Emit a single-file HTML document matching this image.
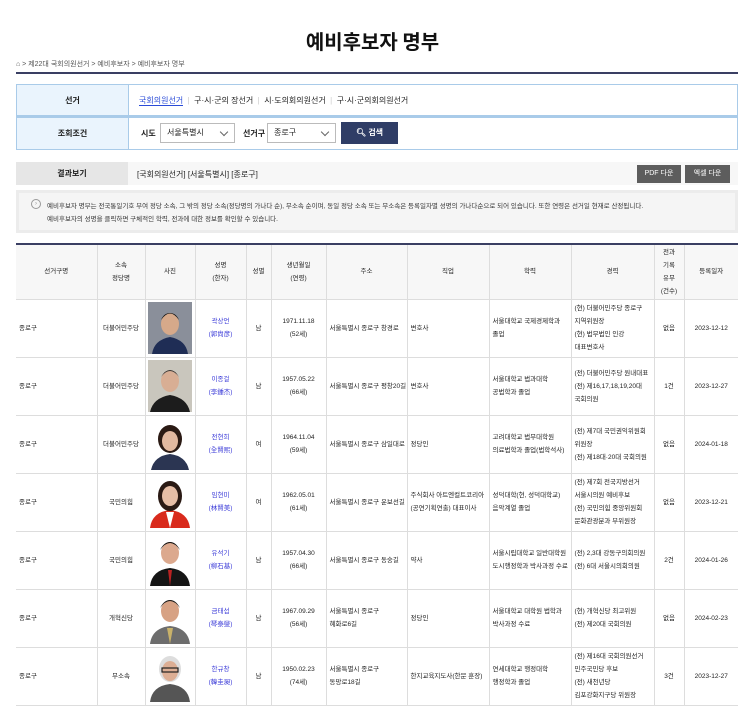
<!DOCTYPE html>
<html><head><meta charset="utf-8">
<style>
*{margin:0;padding:0;box-sizing:border-box}
body{width:745px;height:712px;background:#fff;font-family:"Liberation Sans","Noto Sans CJK KR",sans-serif;color:#222;position:relative;overflow:hidden;font-size:8px}
.a{position:absolute}
h1{position:absolute;left:0;width:745px;top:26px;text-align:center;font-size:20px;font-weight:bold;font-family:"Noto Sans CJK KR",sans-serif;color:#111}
.bc{left:16px;top:59px;font-size:7px;color:#555}
.line{left:16px;top:72px;width:722px;height:2px;background:#3a3f63}
.box{left:16px;width:722px;border:1px solid #a9cbe9;background:#fff}
.lab{position:absolute;left:0;top:0;bottom:0;width:112px;background:#eaf4fd;border-right:1px solid #a9cbe9;display:flex;align-items:center;justify-content:center;font-size:8px;font-weight:bold}
.sel{position:absolute;height:20px;border:1px solid #bbb;background:#fff;font-size:8px;padding:0 6px;line-height:18px}
.sel:after{content:"";position:absolute;right:7px;top:5px;width:5px;height:5px;border-right:1px solid #666;border-bottom:1px solid #666;transform:rotate(45deg)}
.btn{position:absolute;top:165px;height:18px;background:#5d5d5d;color:#fff;font-size:7px;line-height:18px;text-align:center}
table{position:absolute;left:16px;top:243px;width:722px;border-collapse:collapse;table-layout:fixed;border-top:2px solid #3a3f63}
td,th{border:1px solid #ddd;font-size:6.5px;text-align:center;vertical-align:middle;line-height:13px;font-weight:normal;color:#222;white-space:nowrap;overflow:hidden}
th{background:#f7f7f7;height:55px}
td{height:58px}
td:first-child,th:first-child{border-left:none}
td:last-child,th:last-child{border-right:none}
td.l{text-align:left;padding-left:3px}
.nm{color:#3b3bd8}
.ph{width:44px;height:52px;margin:0 auto;display:block}
</style></head><body>
<h1>예비후보자 명부</h1>
<div class="a bc">⌂ &gt; 제22대 국회의원선거 &gt; 예비후보자 &gt; 예비후보자 명부</div>
<div class="a line"></div>
<div class="a box" style="top:84px;height:32px"><div class="lab">선거</div>
<div class="a" style="left:122px;top:10px;font-size:8px;white-space:nowrap"><span style="color:#2a4bd8;border-bottom:1px solid #2a4bd8">국회의원선거</span><span style="color:#ccc"> &nbsp;|&nbsp; </span>구·시·군의 장선거<span style="color:#ccc"> &nbsp;|&nbsp; </span>시·도의회의원선거<span style="color:#ccc"> &nbsp;|&nbsp; </span>구·시·군의회의원선거</div></div>
<div class="a box" style="top:116px;height:34px;border-top:2px solid #a9cbe9"><div class="lab">조회조건</div>
<div class="a" style="left:124px;top:10px;font-weight:bold">시도</div>
<div class="sel" style="left:143px;top:5px;width:75px">서울특별시</div>
<div class="a" style="left:226px;top:10px;font-weight:bold">선거구</div>
<div class="sel" style="left:250px;top:5px;width:69px">종로구</div>
<div class="a" style="left:324px;top:4px;width:57px;height:22px;background:#2f3d66;color:#fff;font-size:8px;line-height:22px;text-align:center;font-weight:bold">🔍︎ 검색</div></div>
<div class="a" style="left:16px;top:162px;width:722px;height:23px;background:#f7f7f7"></div>
<div class="a" style="left:16px;top:162px;width:112px;height:23px;background:#e6e6e6;text-align:center;line-height:23px;font-weight:bold">결과보기</div>
<div class="a" style="left:137px;top:169px">[국회의원선거] [서울특별시] [종로구]</div>
<div class="btn" style="left:637px;width:44px">PDF 다운</div>
<div class="btn" style="left:685px;width:45px">엑셀 다운</div>
<div class="a" style="left:16px;top:190px;width:722px;height:43px;background:#ececec"></div>
<div class="a" style="left:19px;top:193px;width:716px;height:37px;background:#f5f5f5"></div>
<div class="a" style="left:31px;top:199px;width:10px;height:10px;border:1px solid #999;border-radius:50%;font-size:6px;line-height:8px;text-align:center;color:#999">›</div>
<div class="a" style="left:47px;top:200px;font-size:6.5px;line-height:13px;color:#333;white-space:nowrap">예비후보자 명부는 전국통일기호 부여 정당 소속, 그 밖의 정당 소속(정당명의 가나다 순), 무소속 순이며, 동일 정당 소속 또는 무소속은 등록일자별 성명의 가나다순으로 되어 있습니다. 또한 연령은 선거일 현재로 산정됩니다.<br>예비후보자의 성명을 클릭하면 구체적인 학력, 전과에 대한 정보를 확인할 수 있습니다.</div>
<table>
<colgroup><col style="width:81px"><col style="width:48px"><col style="width:50px"><col style="width:51px"><col style="width:25px"><col style="width:55px"><col style="width:81px"><col style="width:82px"><col style="width:82px"><col style="width:83px"><col style="width:30px"><col style="width:54px"></colgroup>
<tr><th>선거구명</th><th>소속<br>정당명</th><th>사진</th><th>성명<br>(한자)</th><th>성별</th><th>생년월일<br>(연령)</th><th>주소</th><th>직업</th><th>학력</th><th>경력</th><th>전과<br>기록<br>유무<br>(건수)</th><th>등록일자</th></tr>
<tr><td class="l">종로구</td><td>더불어민주당</td><td><svg class="ph" viewBox="0 0 44 52"><rect width="44" height="52" fill="#8a8f9a"/><path d="M4 52 Q6 38 22 35 Q38 38 40 52Z" fill="#1f2d55"/><ellipse cx="22" cy="22" rx="9" ry="11" fill="#d6a98a"/><path d="M13 18 Q22 5 31 18 Q28 11 22 11 Q16 11 13 18Z" fill="#111"/></svg></td><td><span class="nm">곽상언<br>(郭尙彦)</span></td><td>남</td><td>1971.11.18<br>(52세)</td><td class="l">서울특별시 종로구 창경로</td><td class="l">변호사</td><td class="l">서울대학교 국제경제학과<br>졸업</td><td class="l">(현) 더불어민주당 종로구<br>지역위원장<br>(현) 법무법인 인강<br>대표변호사</td><td>없음</td><td>2023-12-12</td></tr>
<tr><td class="l">종로구</td><td>더불어민주당</td><td><svg class="ph" viewBox="0 0 44 52"><rect width="44" height="52" fill="#c9c6bd"/><path d="M2 52 Q5 38 22 35 Q39 38 42 52Z" fill="#1c1c1c"/><ellipse cx="22" cy="21" rx="9" ry="11" fill="#d8ae94"/><path d="M13 17 Q22 5 31 17 Q27 10 22 10 Q17 10 13 17Z" fill="#333"/></svg></td><td><span class="nm">이종걸<br>(李鍾杰)</span></td><td>남</td><td>1957.05.22<br>(66세)</td><td class="l">서울특별시 종로구 평창20길</td><td class="l">변호사</td><td class="l">서울대학교 법과대학<br>공법학과 졸업</td><td class="l">(전) 더불어민주당 원내대표<br>(전) 제16,17,18,19,20대<br>국회의원</td><td>1건</td><td>2023-12-27</td></tr>
<tr><td class="l">종로구</td><td>더불어민주당</td><td><svg class="ph" viewBox="0 0 44 52"><rect width="44" height="52" fill="#fff"/><path d="M3 52 Q6 38 22 36 Q38 38 41 52Z" fill="#2b3552"/><ellipse cx="22" cy="21" rx="12" ry="14" fill="#2a1a14"/><ellipse cx="22" cy="23" rx="8" ry="10" fill="#e2b9a0"/></svg></td><td><span class="nm">전현희<br>(全賢熙)</span></td><td>여</td><td>1964.11.04<br>(59세)</td><td class="l">서울특별시 종로구 삼일대로</td><td class="l">정당인</td><td class="l">고려대학교 법무대학원<br>의료법학과 졸업(법학석사)</td><td class="l">(전) 제7대 국민권익위원회<br>위원장<br>(전) 제18대·20대 국회의원</td><td>없음</td><td>2024-01-18</td></tr>
<tr><td class="l">종로구</td><td>국민의힘</td><td><svg class="ph" viewBox="0 0 44 52"><rect width="44" height="52" fill="#fff"/><path d="M2 52 Q4 36 22 34 Q40 36 42 52Z" fill="#d92a1c"/><path d="M18 36 L22 52 L26 36Z" fill="#fff"/><ellipse cx="22" cy="20" rx="12" ry="15" fill="#2a1a14"/><ellipse cx="22" cy="20" rx="8" ry="10" fill="#e6bea6"/></svg></td><td><span class="nm">임현미<br>(林賢美)</span></td><td>여</td><td>1962.05.01<br>(61세)</td><td class="l">서울특별시 종로구 운보선길</td><td class="l">주식회사 아트엔컬트코리아<br>(공연기획연출) 대표이사</td><td class="l">성덕대학(현, 성덕대학교)<br>음악계열 졸업</td><td class="l">(전) 제7회 전국지방선거<br>서울시의원 예비후보<br>(전) 국민의힘 중앙위원회<br>문화관광분과 부위원장</td><td>없음</td><td>2023-12-21</td></tr>
<tr><td class="l">종로구</td><td>국민의힘</td><td><svg class="ph" viewBox="0 0 44 52"><rect width="44" height="52" fill="#fff"/><path d="M2 52 Q4 36 22 34 Q40 36 42 52Z" fill="#151515"/><path d="M20 36 L22 52 L24 36Z" fill="#b22"/><ellipse cx="22" cy="19" rx="9" ry="11" fill="#dca98e"/><path d="M12 16 Q22 2 32 16 Q28 8 22 8 Q16 8 12 16Z" fill="#111"/></svg></td><td><span class="nm">유석기<br>(柳石基)</span></td><td>남</td><td>1957.04.30<br>(66세)</td><td class="l">서울특별시 종로구 동숭길</td><td class="l">약사</td><td class="l">서울시립대학교 일반대학원<br>도시행정학과 박사과정 수료</td><td class="l">(전) 2,3대 강동구의회의원<br>(전) 6대 서울시의회의원</td><td>2건</td><td>2024-01-26</td></tr>
<tr><td class="l">종로구</td><td>개혁신당</td><td><svg class="ph" viewBox="0 0 44 52"><rect width="44" height="52" fill="#fff"/><path d="M2 52 Q4 36 22 34 Q40 36 42 52Z" fill="#6d6d6d"/><path d="M19 36 L22 52 L25 36Z" fill="#c9b26a"/><ellipse cx="22" cy="19" rx="9" ry="11" fill="#d7a284"/><path d="M12 16 Q22 2 32 16 Q28 8 22 8 Q16 8 12 16Z" fill="#1a1a1a"/></svg></td><td><span class="nm">금태섭<br>(琴泰燮)</span></td><td>남</td><td>1967.09.29<br>(56세)</td><td class="l">서울특별시 종로구<br>혜화로6길</td><td class="l">정당인</td><td class="l">서울대학교 대학원 법학과<br>박사과정 수료</td><td class="l">(현) 개혁신당 최고위원<br>(전) 제20대 국회의원</td><td>없음</td><td>2024-02-23</td></tr>
<tr><td class="l">종로구</td><td>무소속</td><td><svg class="ph" viewBox="0 0 44 52"><rect width="44" height="52" fill="#fff"/><path d="M2 52 Q4 36 22 34 Q40 36 42 52Z" fill="#555"/><ellipse cx="22" cy="19" rx="11" ry="13" fill="#ddd"/><ellipse cx="22" cy="21" rx="8" ry="10" fill="#dcae94"/><rect x="14" y="18" width="16" height="4" fill="none" stroke="#222" stroke-width="1.2"/></svg></td><td><span class="nm">한규창<br>(韓圭昶)</span></td><td>남</td><td>1950.02.23<br>(74세)</td><td class="l">서울특별시 종로구<br>동망로18길</td><td class="l">한지교육지도사(한문 훈장)</td><td class="l">연세대학교 행정대학<br>행정학과 졸업</td><td class="l">(전) 제16대 국회의원선거<br>민주국민당 후보<br>(전) 새천년당<br>김포강화지구당 위원장</td><td>3건</td><td>2023-12-27</td></tr>
</table>
</body></html>
